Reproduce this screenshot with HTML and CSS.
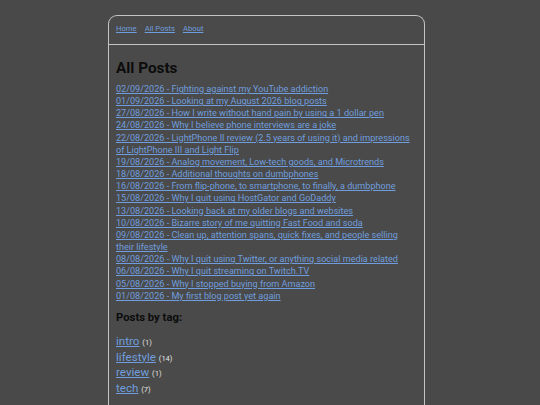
FILE: index.html
```html
<!DOCTYPE html>
<html>
<head>
<meta charset="utf-8">
<link rel="stylesheet" href="styles.css">
</head>
<body>
<div class="page">
  <nav class="nav">
    <a href="#">Home</a>
    <a href="#">All Posts</a>
    <a href="#">About</a>
  </nav>
  <main class="content">
    <h1 class="title">All Posts</h1>
    <ul class="posts">
      <li><a href="#">02/09/2026 - Fighting against my YouTube addiction</a></li>
      <li><a href="#">01/09/2026 - Looking at my August 2026 blog posts</a></li>
      <li><a href="#">27/08/2026 - How I write without hand pain by using a 1 dollar pen</a></li>
      <li><a href="#">24/08/2026 - Why I believe phone interviews are a joke</a></li>
      <li><a href="#">22/08/2026 - LightPhone II review (2.5 years of using it) and impressions of LightPhone III and Light Flip</a></li>
      <li><a href="#">19/08/2026 - Analog movement, Low-tech goods, and Microtrends</a></li>
      <li><a href="#">18/08/2026 - Additional thoughts on dumbphones</a></li>
      <li><a href="#">16/08/2026 - From flip-phone, to smartphone, to finally, a dumbphone</a></li>
      <li><a href="#">15/08/2026 - Why I quit using HostGator and GoDaddy</a></li>
      <li><a href="#">13/08/2026 - Looking back at my older blogs and websites</a></li>
      <li><a href="#">10/08/2026 - Bizarre story of me quitting Fast Food and soda</a></li>
      <li><a href="#">09/08/2026 - Clean up, attention spans, quick fixes, and people selling their lifestyle</a></li>
      <li><a href="#">08/08/2026 - Why I quit using Twitter, or anything social media related</a></li>
      <li><a href="#">06/08/2026 - Why I quit streaming on Twitch.TV</a></li>
      <li><a href="#">05/08/2026 - Why I stopped buying from Amazon</a></li>
      <li><a href="#">01/08/2026 - My first blog post yet again</a></li>
    </ul>
    <h2 class="subtitle">Posts by tag:</h2>
    <ul class="tags">
      <li><a href="#">intro</a> <span class="count">(1)</span></li>
      <li><a href="#">lifestyle</a> <span class="count">(14)</span></li>
      <li><a href="#">review</a> <span class="count">(1)</span></li>
      <li><a href="#">tech</a> <span class="count">(7)</span></li>
    </ul>
  </main>
</div>
</body>
</html>
```
FILE: styles.css
```css
html, body {
  margin: 0;
  padding: 0;
  background: #494949;
  font-family: Roboto, "Liberation Sans", sans-serif;
  height: 100%;
  overflow: hidden;
}
a {
  color: #6f9ddd;
}
.page {
  width: 315px;
  margin: 15px 0 0 108px;
  border: 1.5px solid #c4c4c4;
  border-bottom: none;
  border-radius: 9px 9px 0 0;
  background: #4a4a4a;
  min-height: 420px;
}
.nav {
  display: flex;
  gap: 8px;
  padding: 8px 7px 0 7px;
  height: 20px;
  border-bottom: 1.5px solid #c4c4c4;
  font-size: 7.7px;
  line-height: 10px;
}
.content {
  padding: 14px 7px 0 7px;
}
.title {
  margin: 0 0 5px 0;
  font-size: 15.3px;
  line-height: 19px;
  font-weight: 700;
  color: #0c0c0c;
}
.posts {
  list-style: none;
  margin: 0;
  padding: 0;
  font-size: 9.1px;
  line-height: 12.15px;
}
.subtitle {
  margin: 9px 0 9px 0;
  font-size: 11.3px;
  line-height: 14px;
  font-weight: 700;
  color: #0c0c0c;
}
.tags {
  list-style: none;
  margin: 0;
  padding: 0;
  font-size: 11.6px;
  line-height: 15.7px;
}
.tags li {
  height: 15.7px;
}
.count {
  font-size: 7.5px;
  line-height: 1;
  color: #e4e4e4;
}
```
